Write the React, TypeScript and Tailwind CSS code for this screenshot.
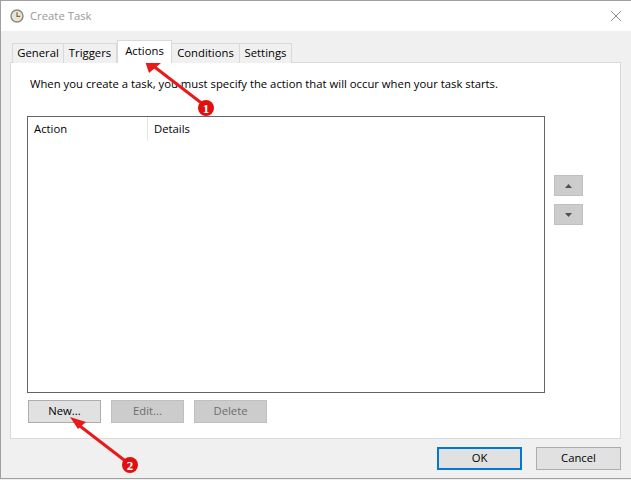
import React from 'react';

const font = "[font-family:'Open_Sans','Noto_Sans',sans-serif]";

const tabs = [
  { name: 'General', width: 'w-[52px]' },
  { name: 'Triggers', width: 'w-[53px]' },
  { name: 'Actions', width: 'w-[55px]', active: true },
  { name: 'Conditions', width: 'w-[68px]' },
  { name: 'Settings', width: 'w-[52px]' },
];

const Btn = ({ label, disabled, focused, className = '' }: { label: string; disabled?: boolean; focused?: boolean; className?: string }) => (
  <div
    className={`flex items-center justify-center h-[23px] text-[11.3px] ${
      focused
        ? 'bg-[#e1e1e1] border-2 border-[#0078d7] text-black'
        : disabled
          ? 'bg-[#cccccc] border border-[#bfbfbf] text-[#6d6d6d]'
          : 'bg-[#e1e1e1] border border-[#adadad] text-black'
    } ${className}`}
  >
    {label}
  </div>
);

const ClockIcon = () => (
  <svg width="14" height="14" viewBox="0 0 14 14" className="shrink-0">
    <circle cx="7" cy="7" r="6" fill="#e8e4d8" stroke="#8b8880" strokeWidth="1.4" />
    <path d="M7 3.2V7.4H10.2" fill="none" stroke="#8a6a2a" strokeWidth="1.2" />
  </svg>
);

// red arrows and numbered badges drawn over the dialog
const Annotations = () => (
  <svg width="631" height="480" viewBox="0 0 631 480" className="absolute left-0 top-0 pointer-events-none">
    <path d="M204 105L152 65" stroke="#e81a1a" strokeWidth="3" />
    <path d="M144 58L161 63L149 73Z" fill="#e81a1a" />
    <circle cx="206" cy="108" r="8" fill="#e01010" />
    <text x="206" y="113" textAnchor="middle" fontSize="13" fontWeight="700" fill="#fff" fontFamily="Liberation Serif">1</text>
    <path d="M128 463L76 423" stroke="#e81a1a" strokeWidth="3" />
    <path d="M70 417L86 422L78 429Z" fill="#e81a1a" />
    <circle cx="130" cy="465" r="8" fill="#e01010" />
    <text x="130" y="470" textAnchor="middle" fontSize="13" fontWeight="700" fill="#fff" fontFamily="Liberation Serif">2</text>
  </svg>
);

export default function App() {
  return (
    <div className={`relative w-[631px] h-[480px] overflow-hidden bg-[#f0f0f0] ${font}`}>
      <div className="flex flex-col h-[479px] border-t border-l border-b border-[#a0a0a0]">
        {/* Title bar */}
        <div className="flex items-center h-[30px] bg-white pl-[9px] pr-[9px] shrink-0">
          <ClockIcon />
          <span className="ml-[6px] text-[11.3px] text-[#999999]">Create Task</span>
          <svg width="12" height="12" viewBox="0 0 12 12" className="ml-auto text-[#8a8a8a]">
            <path d="M1 1L11 11M11 1L1 11" stroke="currentColor" strokeWidth="1" fill="none" />
          </svg>
        </div>

        {/* Tabs */}
        <div className="flex items-end h-[32px] pl-[11px] shrink-0 relative z-10 -mb-px">
          {tabs.map((t) =>
            t.active ? (
              <div
                key={t.name}
                className={`${t.width} h-[23px] flex items-start pt-[2px] justify-center bg-white border border-b-0 border-[#d9d9d9] text-[11.3px] text-black`}
              >
                {t.name}
              </div>
            ) : (
              <div
                key={t.name}
                className={`${t.width} h-[20px] flex items-center justify-center pb-[1px] bg-[#f0f0f0] border border-l-0 first:border-l border-b-0 border-[#d9d9d9] text-[11.3px] text-black`}
              >
                {t.name}
              </div>
            ),
          )}
        </div>

        {/* Panel */}
        <div className="ml-[9px] w-[611px] h-[377px] shrink-0 bg-white border border-[#d9d9d9] pl-[16px] pt-[12px]">
          <p className="pl-[3px] text-[11.3px] leading-[17px] text-black">
            When you create a task, you must specify the action that will occur when your task starts.
          </p>
          <div className="flex mt-[24px]">
            <div className="w-[518px] h-[277px] border border-[#646464] bg-white">
              <div className="flex h-[24px] text-[11.3px] text-black">
                <div className="w-[120px] pl-[6px] pt-[4px] border-r border-[#e5e5e5]">Action</div>
                <div className="pl-[6px] pt-[4px]">Details</div>
              </div>
            </div>
            <div className="flex flex-col gap-[8px] ml-[9px] mt-[59px]">
              <div className="flex items-center justify-center w-[29px] h-[21px] bg-[#cccccc] border border-[#bfbfbf]">
                <svg width="7" height="4" viewBox="0 0 7 4"><path d="M3.5 0L7 4H0Z" fill="#505050" /></svg>
              </div>
              <div className="flex items-center justify-center w-[29px] h-[21px] bg-[#cccccc] border border-[#bfbfbf]">
                <svg width="7" height="4" viewBox="0 0 7 4"><path d="M0 0H7L3.5 4Z" fill="#505050" /></svg>
              </div>
            </div>
          </div>
          <div className="flex gap-[10px] mt-[7px] pl-[1px]">
            <Btn label="New..." className="w-[73px]" />
            <Btn label="Edit..." disabled className="w-[73px]" />
            <Btn label="Delete" disabled className="w-[73px]" />
          </div>
        </div>

        {/* Footer */}
        <div className="flex justify-end gap-[14px] mt-[8px] pr-[10px]">
          <Btn label="OK" focused className="w-[85px]" />
          <Btn label="Cancel" className="w-[85px]" />
        </div>
      </div>
      <Annotations />
    </div>
  );
}
